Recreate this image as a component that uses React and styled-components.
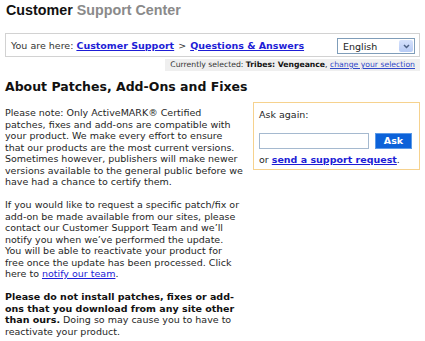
import React from 'react';
import styled, { createGlobalStyle } from 'styled-components';

const GlobalStyle = createGlobalStyle`
  body {
    margin: 0;
    background: #fff;
    font-family: "DejaVu Sans", Verdana, sans-serif;
    color: #222;
  }
`;

const Page = styled.div`
  width: 415px;
  padding: 0 5px;
`;

const Title = styled.h1`
  margin: 1.5px 0 14.5px 1px;
  font-family: "Liberation Sans", Arial, sans-serif;
  font-size: 14.3px;
  line-height: 17px;
  font-weight: bold;
  color: #111;
  span {
    color: #8a8a8a;
  }
`;

const Crumbs = styled.div`
  display: flex;
  align-items: center;
  height: 22px;
  border: 1px solid #d2d2d2;
  padding: 0 4px 0 5px;
  font-size: 9.5px;
  color: #333;
`;

const CrumbText = styled.div`
  flex: 1;
  a {
    color: #1d1dd6;
    font-weight: bold;
    text-decoration: underline;
  }
`;

const Sep = styled.span`
  margin: 0 4px;
`;

const Select = styled.div`
  display: flex;
  align-items: center;
  justify-content: space-between;
  width: 70px;
  height: 14px;
  margin-top: 2px;
  border: 1px solid #7f9db9;
  background: #fff;
  padding: 0 1px 0 5px;
  font-size: 9.5px;
  color: #222;
`;

const SelectButton = styled.span`
  display: flex;
  align-items: center;
  justify-content: center;
  width: 14px;
  height: 12px;
  border-radius: 2px;
  background: linear-gradient(#d6e2fc, #b7cbf5);
`;

const Strip = styled.div`
  display: flex;
  justify-content: flex-end;
  margin-top: 2px;
`;

const StripInner = styled.div`
  height: 12px;
  line-height: 12px;
  padding: 0 5px 0 5px;
  background: #efefef;
  font-size: 7.7px;
  color: #333;
  b {
    color: #111;
  }
  a {
    color: #3048c8;
    text-decoration: underline;
  }
`;

const Heading = styled.h2`
  margin: 8px 0 8px;
  font-size: 12.5px;
  line-height: 15px;
  font-weight: bold;
  color: #111;
`;

const Row = styled.div`
  display: flex;
  align-items: flex-start;
  justify-content: space-between;
`;

const Column = styled.div`
  width: 239px;
  padding-top: 5px;
`;

const Para = styled.p`
  margin: 0 0 11.5px;
  font-size: 9.5px;
  line-height: 11.5px;
  color: #262626;
  a {
    color: #1d1dd6;
    text-decoration: underline;
  }
  b {
    color: #111;
  }
`;

const AskBox = styled.div`
  width: 154px;
  border: 1px solid #f6d28e;
  padding: 6px 6px 4px 5px;
  font-size: 9.5px;
  line-height: 11.5px;
  color: #262626;
  a {
    color: #1d1dd6;
    font-weight: bold;
    text-decoration: underline;
  }
`;

const AskRow = styled.div`
  display: flex;
  gap: 6px;
  margin: 12px 0 5px;
`;

const Input = styled.input`
  box-sizing: border-box;
  width: 110px;
  height: 16px;
  margin: 0;
  border: 1px solid #a5b9cf;
  padding: 0 2px;
`;

const Button = styled.button`
  box-sizing: border-box;
  width: 37px;
  height: 16px;
  margin: 0;
  padding: 0;
  border: 1px solid #5b9ae8;
  background: #0c62d9;
  color: #fff;
  font-family: "DejaVu Sans", Verdana, sans-serif;
  font-size: 9.5px;
  font-weight: bold;
`;

export default function App() {
  return (
    <Page>
      <GlobalStyle />
      <Title>
        Customer <span>Support Center</span>
      </Title>
      <Crumbs>
        <CrumbText>
          You are here: <a href="#">Customer Support</a>
          <Sep>&gt;</Sep>
          <a href="#">Questions &amp; Answers</a>
        </CrumbText>
        <Select>
          English
          <SelectButton>
            <svg width="7" height="5" viewBox="0 0 7 5">
              <path d="M1 1 L3.5 3.5 L6 1" fill="none" stroke="#4d6185" strokeWidth="1.5" />
            </svg>
          </SelectButton>
        </Select>
      </Crumbs>
      <Strip>
        <StripInner>
          Currently selected: <b>Tribes: Vengeance</b>, <a href="#">change your selection</a>
        </StripInner>
      </Strip>
      <Heading>About Patches, Add-Ons and Fixes</Heading>
      <Row>
        <Column>
          <Para>
            Please note: Only ActiveMARK® Certified patches, fixes and add-ons are compatible
            with your product. We make every effort to ensure that our products are the most
            current versions. Sometimes however, publishers will make newer versions available
            to the general public before we have had a chance to certify them.
          </Para>
          <Para>
            If you would like to request a specific patch/fix or add-on be made available from
            our sites, please contact our Customer Support Team and we’ll notify you when we’ve
            performed the update.
            <br />
            You will be able to reactivate your product for
            <br />
            free once the update has been processed. Click
            <br />
            here to <a href="#">notify our team</a>.
          </Para>
          <Para>
            <b>Please do not install patches, fixes or add-ons that you download from any site
            other than ours.</b> Doing so may cause you to have to reactivate your product.
          </Para>
        </Column>
        <AskBox>
          <div>Ask again:</div>
          <AskRow>
            <Input type="text" />
            <Button>Ask</Button>
          </AskRow>
          <div>
            or <a href="#">send a support request</a>.
          </div>
        </AskBox>
      </Row>
    </Page>
  );
}
